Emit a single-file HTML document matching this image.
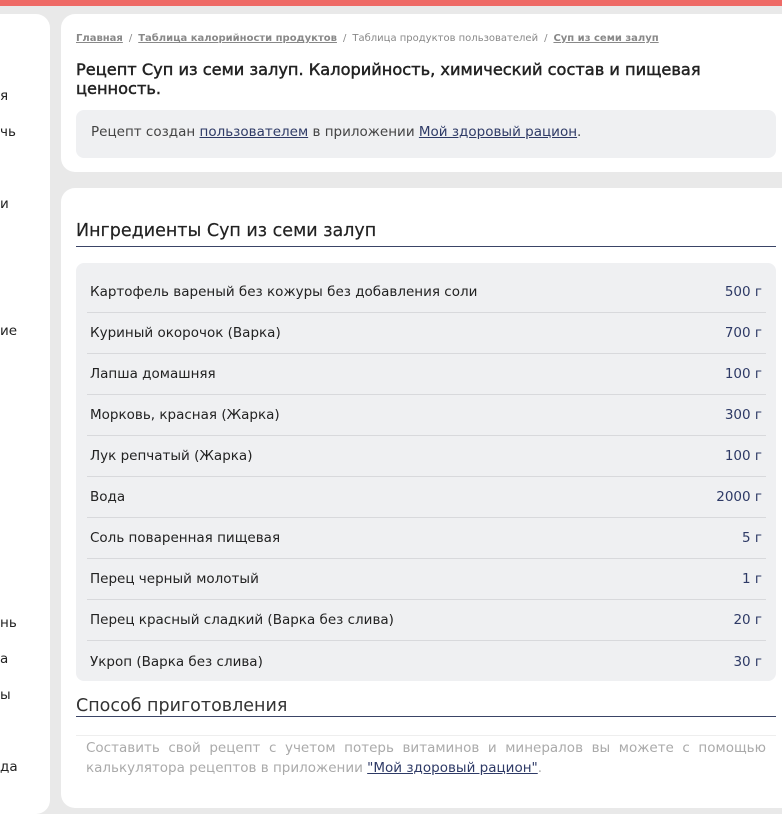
<!DOCTYPE html>
<html><head><meta charset="utf-8"><style>
*{box-sizing:border-box;margin:0;padding:0}
body{width:782px;height:787px;overflow:hidden;background:#e9e9e9;font-family:"DejaVu Sans","Liberation Sans",sans-serif;color:#222;position:relative}
.top{position:absolute;left:0;top:0;width:782px;height:6px;background:#ee6a66}
.side{position:absolute;left:-20px;top:14px;width:70px;height:800px;background:#fff;border-radius:14px}
.side span{position:absolute;left:20px;font-size:13.5px;color:#222}
.card{position:absolute;left:61px;background:#fff;border-radius:14px;width:740px}
.c1{top:14px;height:158px}
.c2{top:188px;height:620px}
.bc{position:absolute;left:15px;top:19px;font-size:10px;color:#888;white-space:nowrap}
.bc a{color:#888;text-decoration:underline;font-weight:bold}
.bc i{font-style:normal;margin:0 6px}
h1{position:absolute;left:15px;top:46px;font-size:16.2px;font-weight:normal;-webkit-text-stroke:0.45px #222;line-height:19px;color:#222;width:700px}
.note{position:absolute;left:15px;top:96px;width:700px;height:48px;background:#eff0f2;border-radius:8px;font-size:13.5px;color:#444;padding:14px 15px}
.note a{color:#2e3a66;text-decoration:underline}
h2{position:absolute;left:15px;top:33px;width:700px;font-size:17.5px;font-weight:normal;-webkit-text-stroke:0.2px #222;color:#222;border-bottom:1.5px solid #3a4466;padding-bottom:5px}
.tbl{position:absolute;left:15px;top:75px;width:700px;height:418px;background:#eff0f2;border-radius:8px;padding:9px 10px 0 11px}
.row{height:41px;border-bottom:1px solid #d8d9dc;display:flex;justify-content:space-between;align-items:center;font-size:13.5px;padding:0 4px 0 3px}
.row:last-child{border-bottom:none}
.row b{font-weight:normal;color:#2e3a66}
h3{position:absolute;left:15px;top:508px;width:700px;font-size:17.5px;font-weight:normal;color:#333;border-bottom:1.5px solid #3a4466;padding-bottom:0}
.desc{position:absolute;left:15px;top:547px;width:700px;border-top:1px solid #eee;padding:2px 10px;font-size:13.5px;line-height:20px;color:#aaa;text-align:justify}
.desc a{color:#2e3a66;text-decoration:underline}
</style></head><body>
<div class="top"></div>
<div class="side">
<span style="top:74px">я</span><span style="top:110px">чь</span><span style="top:182px">и</span><span style="top:309px">ие</span><span style="top:601px">нь</span><span style="top:637px">а</span><span style="top:673px">ы</span><span style="top:745px">да</span>
</div>
<div class="card c1">
<div class="bc"><a>Главная</a><i>/</i><a>Таблица калорийности продуктов</a><i>/</i>Таблица продуктов пользователей<i>/</i><a>Суп из семи залуп</a></div>
<h1>Рецепт Суп из семи залуп. Калорийность, химический состав и пищевая ценность.</h1>
<div class="note">Рецепт создан <a>пользователем</a> в приложении <a>Мой здоровый рацион</a>.</div>
</div>
<div class="card c2">
<h2>Ингредиенты Суп из семи залуп</h2>
<div class="tbl">
<div class="row"><span>Картофель вареный без кожуры без добавления соли</span><b>500 г</b></div>
<div class="row"><span>Куриный окорочок (Варка)</span><b>700 г</b></div>
<div class="row"><span>Лапша домашняя</span><b>100 г</b></div>
<div class="row"><span>Морковь, красная (Жарка)</span><b>300 г</b></div>
<div class="row"><span>Лук репчатый (Жарка)</span><b>100 г</b></div>
<div class="row"><span>Вода</span><b>2000 г</b></div>
<div class="row"><span>Соль поваренная пищевая</span><b>5 г</b></div>
<div class="row"><span>Перец черный молотый</span><b>1 г</b></div>
<div class="row"><span>Перец красный сладкий (Варка без слива)</span><b>20 г</b></div>
<div class="row"><span>Укроп (Варка без слива)</span><b>30 г</b></div>
</div>
<h3>Способ приготовления</h3>
<div class="desc">Составить свой рецепт с учетом потерь витаминов и минералов вы можете с помощью калькулятора рецептов в приложении <a>"Мой здоровый рацион"</a>.</div>
</div>
</body></html>
